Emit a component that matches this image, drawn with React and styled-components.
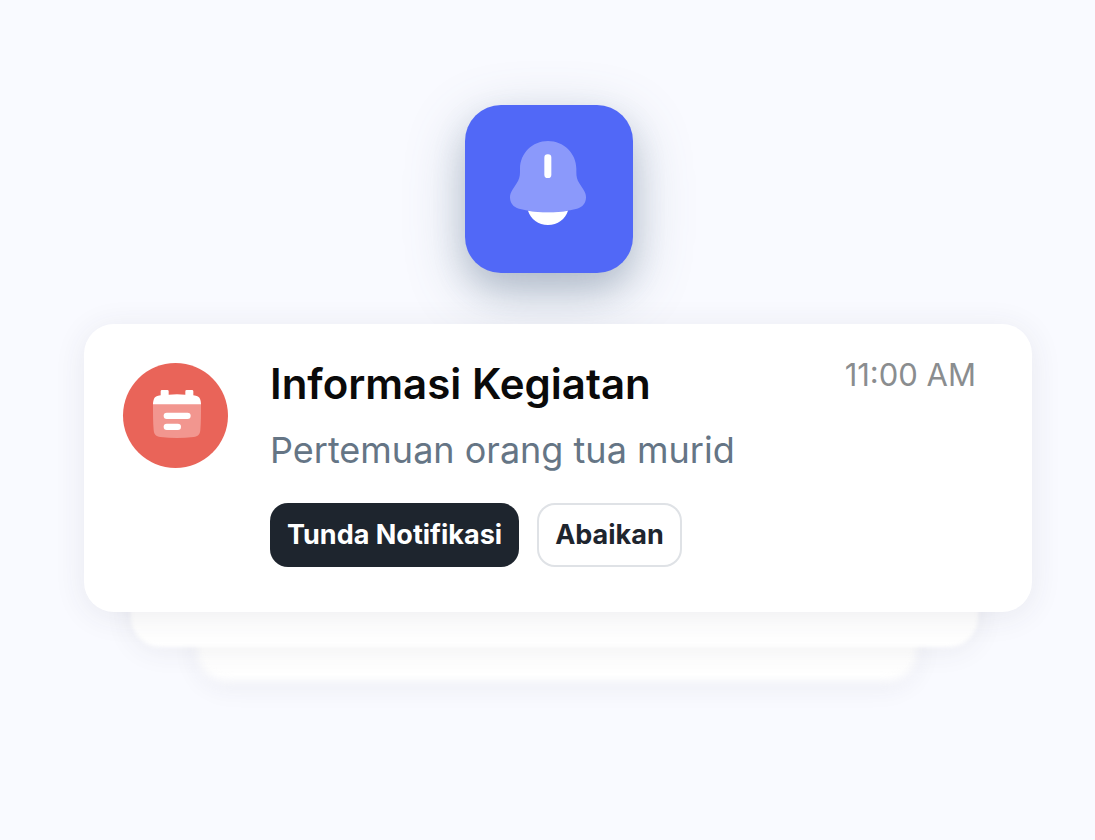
import React from 'react'
import styled, { createGlobalStyle } from 'styled-components';

export default function App() {
    return (
        <>
            <GlobalStyle />
            <Page>
                <AppIcon>
                    <BellIcon />
                </AppIcon>
                <Stack>
                    <Card>
                        <Badge>
                            <CalendarIcon />
                        </Badge>
                        <Content>
                            <Title>Informasi Kegiatan</Title>
                            <Desc>Pertemuan orang tua murid</Desc>
                            <Buttons>
                                <DarkButton type="button">Tunda Notifikasi</DarkButton>
                                <LightButton type="button">Abaikan</LightButton>
                            </Buttons>
                        </Content>
                        <Time>11:00 AM</Time>
                    </Card>
                    <MiddleSheet />
                    <BackSheet />
                </Stack>
            </Page>
        </>
    )
}

function BellIcon() {
    return (
        <svg width="76" height="84" viewBox="30 33 228 252" aria-hidden="true">
            <path
                d="M144 33C97 33 60 70 60 116V126C60 140 57 149 50 160L37 180C32 188 30 194 30 202C30 219 40 232 57 236C84 243 113 247 144 247C175 247 204 243 231 236C248 232 258 219 258 202C258 194 256 188 251 180L238 160C231 149 229 140 229 126V116C229 70 191 33 144 33Z"
                fill="#8b99fb"
            />
            <path d="M84 242C103 245 123 247 144 247C165 247 185 245 204 242C196 267 173 285 144 285C115 285 92 267 84 242Z" fill="#fff" />
            <rect x="133" y="73" width="21" height="71" rx="10" fill="#fff" />
        </svg>
    )
}

function CalendarIcon() {
    return (
        <svg width="48" height="48" viewBox="114 105 144 144" aria-hidden="true">
            <path d="M114 147H258C258 178 258 202 256 225C255 239 249 244 236 246C203 250 169 250 136 246C123 244 117 239 116 225C114 202 114 178 114 147Z" fill="#f2968f" />
            <path d="M114 148C114 142 115 138 116 134C118 126 126 122 137 121V109Q137 105 141 105H157Q161 105 161 109V119Q186 117 211 119V109Q211 105 215 105H231Q235 105 235 109V121C246 122 254 126 256 134C257 138 258 142 258 148Z" fill="#fff" />
            <rect x="146" y="173" width="81" height="19" rx="9.5" fill="#fff" />
            <rect x="146" y="206" width="52" height="19" rx="9.5" fill="#fff" />
        </svg>
    )
}

const GlobalStyle = createGlobalStyle`
    *{
        box-sizing:border-box;
    }
    body{
        margin:0;
        background-color:#f9faff;
        font-family:Inter, "Liberation Sans", sans-serif;
    }
`;

const Page = styled.main`
    min-height:100vh;
    padding-top:105px;
    display:flex;
    flex-direction:column;
    align-items:center;
    gap:51px;
`;

const AppIcon = styled.div`
    width:168px;
    height:168px;
    margin-left:3px;
    padding:0 3px 12px 0;
    border-radius:36px;
    background-color:#5168f7;
    display:flex;
    align-items:center;
    justify-content:center;
    flex-shrink:0;
    box-shadow:0 18px 60px rgba(80,105,130,0.32), 0 16px 32px rgba(80,105,130,0.22);
`;

const Stack = styled.section`
    width:100%;
    padding:0 63px 80px 84px;
    display:flex;
    flex-direction:column;
`;

const Card = styled.article`
    position:relative;
    z-index:2;
    padding:39px 56px 45px 39px;
    border-radius:30px;
    background-color:#fff;
    display:flex;
    align-items:flex-start;
    box-shadow:0 4px 32px rgba(60,60,80,0.09);
`;

const Badge = styled.div`
    width:105px;
    height:105px;
    margin-right:42px;
    padding:0 0 3px 3px;
    border-radius:50%;
    background-color:#e96459;
    display:flex;
    align-items:center;
    justify-content:center;
    flex-shrink:0;
`;

const Content = styled.div`
    flex:1;
`;

const Title = styled.h1`
    margin:0;
    color:#0a0a0a;
    font-size:42px;
    line-height:42px;
    font-weight:600;
`;

const Desc = styled.p`
    margin:20px 0 28px;
    color:#657585;
    font-size:36px;
    line-height:50px;
`;

const Time = styled.time`
    color:#8a8d8f;
    font-size:31px;
    line-height:24px;
`;

const Buttons = styled.div`
    display:flex;
    gap:18px;
`;

const DarkButton = styled.button`
    height:64px;
    padding:0 17px;
    border:none;
    border-radius:18px;
    background-color:#1e252e;
    color:#fff;
    font-family:inherit;
    font-size:27px;
    line-height:32px;
    font-weight:700;
    white-space:nowrap;
    cursor:pointer;
`;

const LightButton = styled(DarkButton)`
    padding:0 16px;
    border:2px solid #dfe2e6;
    background-color:#fff;
    color:#1e252e;
`;

const Sheet = styled.div`
    border-radius:0 0 30px 30px;
    background-color:#fff;
`;

const MiddleSheet = styled(Sheet)`
    position:relative;
    z-index:1;
    height:65px;
    margin:-30px 54px 0 47px;
    filter:blur(2px);
    box-shadow:0 4px 28px rgba(60,60,80,0.08);
`;

const BackSheet = styled(Sheet)`
    height:64px;
    margin:-30px 115px 0 113px;
    filter:blur(5px);
    box-shadow:0 6px 24px rgba(60,60,80,0.07);
`;
